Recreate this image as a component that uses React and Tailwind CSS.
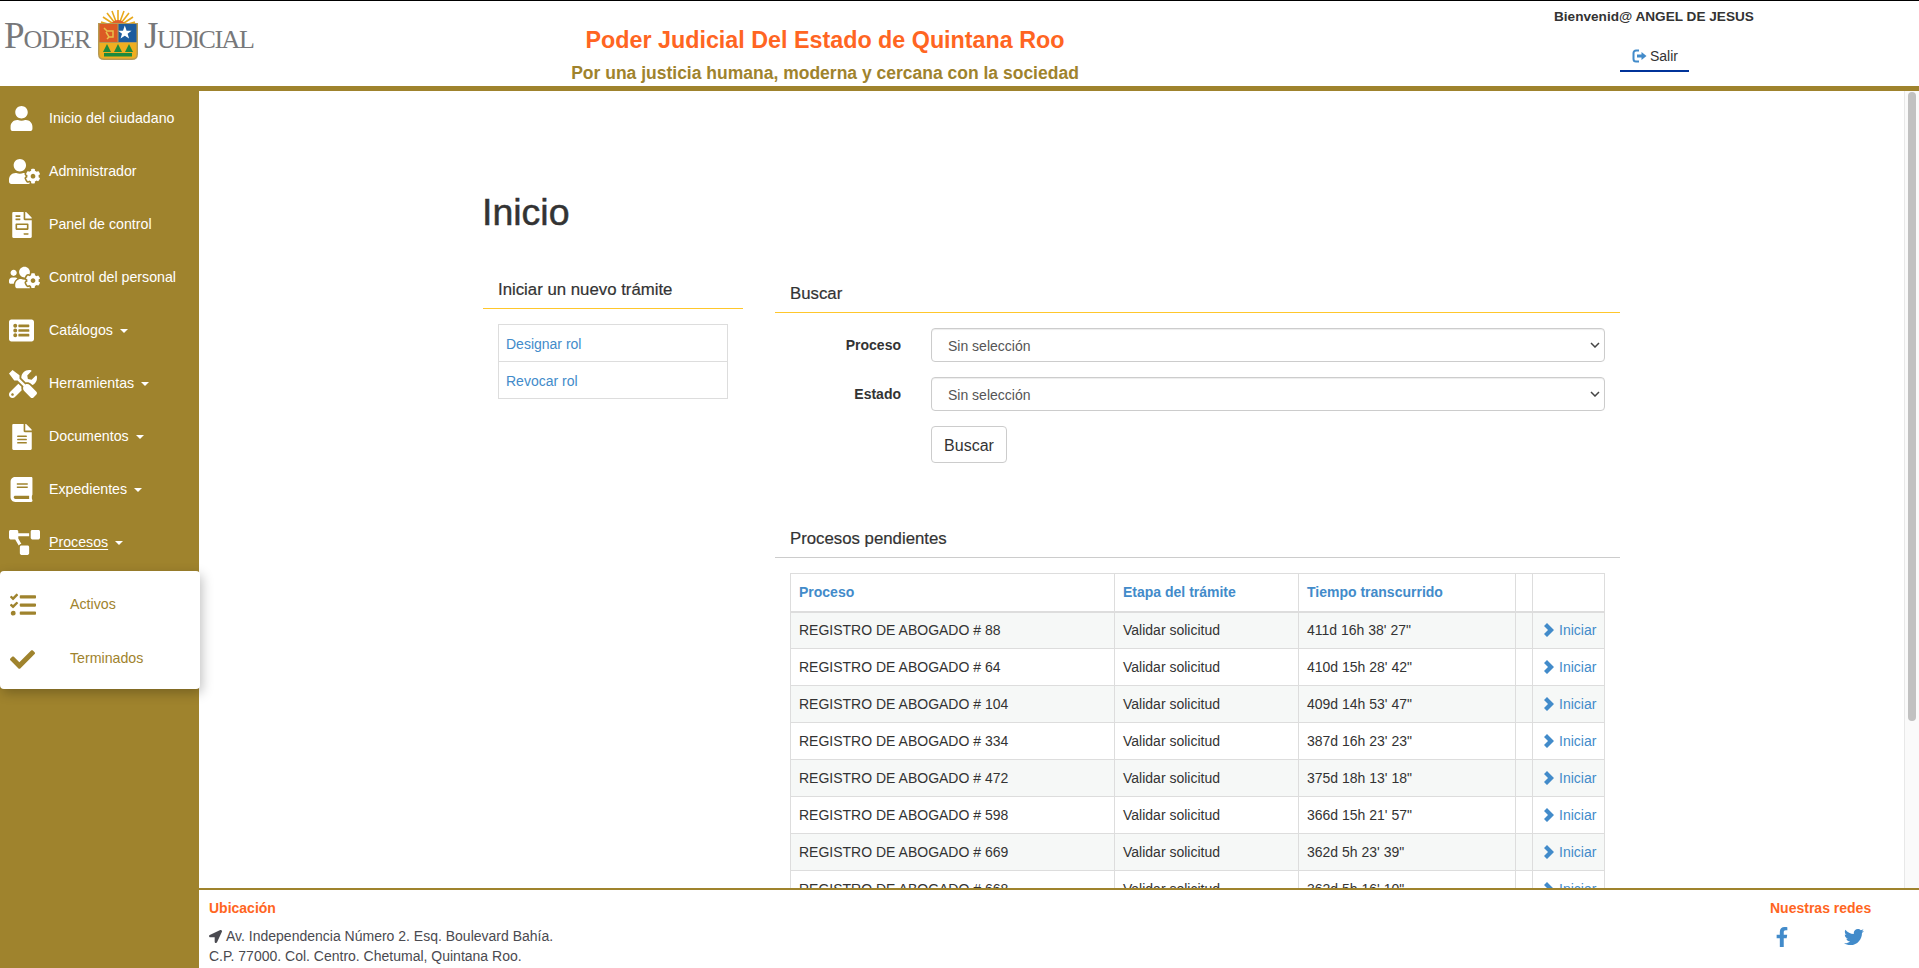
import {
  FaBook,
  FaCheck,
  FaFacebookF,
  FaFileAlt,
  FaFileInvoice,
  FaListAlt,
  FaLocationArrow,
  FaProjectDiagram,
  FaTasks,
  FaTools,
  FaTwitter,
  FaUser,
  FaUserCog,
  FaUsersCog,
} from "react-icons/fa";

const menu = [
  { label: "Inicio del ciudadano", icon: FaUser, size: 25 },
  { label: "Administrador", icon: FaUserCog, size: 31 },
  { label: "Panel de control", icon: FaFileInvoice, size: 26 },
  { label: "Control del personal", icon: FaUsersCog, size: 31 },
  { label: "Catálogos", icon: FaListAlt, size: 25, caret: true },
  { label: "Herramientas", icon: FaTools, size: 28, caret: true },
  { label: "Documentos", icon: FaFileAlt, size: 26, caret: true },
  { label: "Expedientes", icon: FaBook, size: 25, caret: true },
  { label: "Procesos", icon: FaProjectDiagram, size: 31, caret: true, active: true },
];

const pendientes = [
  ["REGISTRO DE ABOGADO # 88", "411d 16h 38' 27\""],
  ["REGISTRO DE ABOGADO # 64", "410d 15h 28' 42\""],
  ["REGISTRO DE ABOGADO # 104", "409d 14h 53' 47\""],
  ["REGISTRO DE ABOGADO # 334", "387d 16h 23' 23\""],
  ["REGISTRO DE ABOGADO # 472", "375d 18h 13' 18\""],
  ["REGISTRO DE ABOGADO # 598", "366d 15h 21' 57\""],
  ["REGISTRO DE ABOGADO # 669", "362d 5h 23' 39\""],
  ["REGISTRO DE ABOGADO # 668", "362d 5h 16' 10\""],
];

function Shield() {
  return (
    <svg width="42" height="54" viewBox="0 0 42 54" className="shrink-0">
      <g stroke="#e8a91c" strokeWidth="1.6">
        <path d="M21 19V2M21 19L15 3M21 19L27 3M21 19L10 5M21 19L32 5M21 19L6 9M21 19L36 9M21 19L4 14M21 19L38 14" />
      </g>
      <path d="M13 20a8 8 0 0 1 16 0z" fill="#e2602a" />
      <path d="M1 15h40v31q0 6-6 6H7q-6 0-6-6z" fill="#b79a53" />
      <rect x="2.5" y="16" width="18" height="18" fill="#dc5a24" />
      <rect x="21.5" y="16" width="18" height="18" fill="#1d5c9e" />
      <path d="M2.500 35h37v11q0 4.500-4.500 4.500H7q-4.500 0-4.500-4.500z" fill="#efae20" />
      <path d="M7 20l3 3h6v6h-4l-3-5M12 29l-2 2" stroke="#e8c04a" strokeWidth="1.500" fill="none" />
      <path d="M30.500 18.500l2.200 6.200h6l-4.800 3.700 1.800 6-5.200-3.600-5.200 3.600 1.800-6-4.800-3.700h6z" fill="#fff" transform="translate(2.800 2.400) scale(.82)" />
      <g fill="#1d8a3c">
        <path d="M10 36l4 8H6zM21 36l4 8h-8zM32 36l4 8h-8z" />
        <rect x="7" y="45" width="28" height="3.500" />
      </g>
    </svg>
  );
}

function Logo() {
  return (
    <div className="flex items-center font-['Liberation_Serif',serif] text-[#77787a]">
      <span className="w-[97px] pl-1 text-[37px] leading-none tracking-[-1px] [font-variant:small-caps]">
        Poder
      </span>
      <Shield />
      <span className="pl-[5px] text-[37px] leading-none tracking-[-1.5px] [font-variant:small-caps]">
        Judicial
      </span>
    </div>
  );
}

function LogoutIcon() {
  return (
    <svg width="15" height="14" viewBox="0 0 15 14" className="mt-[2px]">
      <path d="M7 1.500H4a2.500 2.500 0 0 0-2.500 2.500v6A2.500 2.500 0 0 0 4 12.500h3" fill="none" stroke="#428bca" strokeWidth="2" />
      <path d="M5 5.500h4.500V3L14.500 7l-5 4V8.500H5z" fill="#428bca" />
    </svg>
  );
}

function Header() {
  return (
    <header className="flex h-[91px] shrink-0 border-t border-b-[5px] border-t-black border-b-[#9f832d] bg-white">
      <div className="flex w-[420px] items-start pt-[7px]">
        <Logo />
      </div>
      <div className="w-[810px] pt-[24px] text-center font-bold">
        <div className="text-[23.3px] leading-[30px] text-[#ff6522]">
          Poder Judicial Del Estado de Quintana Roo
        </div>
        <div className="mt-[7px] text-[17.5px] leading-[22px] text-[#9f832d]">
          Por una justicia humana, moderna y cercana con la sociedad
        </div>
      </div>
      <div className="ml-[324px] w-[201px] pt-[8px]">
        <div className="text-[13.6px] leading-[16px] font-bold whitespace-nowrap text-[#333]">
          Bienvenid@ ANGEL DE JESUS
        </div>
        <div className="mt-[22px] ml-[66px] flex h-[25px] w-[69px] items-start gap-[3px] border-b-2 border-[#003399] pl-[12px] text-[14px] leading-[18px] text-[#333]">
          <LogoutIcon />
          Salir
        </div>
      </div>
    </header>
  );
}

function Sidebar() {
  return (
    <aside className="relative w-[199px] shrink-0 bg-[#9f832d] pt-[1px] text-[14.2px] text-white">
      {menu.map((item) => {
        const Icon = item.icon;
        return (
          <div key={item.label} className="flex h-[53px] items-center">
            <div className="flex w-[49px] shrink-0 justify-start pl-[9px]">
              <Icon size={item.size} />
            </div>
            <span className={item.active ? "underline underline-offset-2" : ""}>{item.label}</span>
            {item.caret && (
              <span className="ml-[7px] h-0 w-0 border-x-4 border-t-4 border-x-transparent border-t-white" />
            )}
          </div>
        );
      })}
      <div className="absolute top-[480px] left-0 z-10 h-[118px] w-[200px] rounded bg-white pt-[6px] text-[#9f832d] shadow-[2px_4px_12px_rgba(0,0,0,0.25)]">
        <div className="flex h-[55px] items-center">
          <div className="w-[70px] pl-[10px]">
            <FaTasks size={26} />
          </div>
          Activos
        </div>
        <div className="flex h-[54px] items-center">
          <div className="w-[70px] pl-[10px]">
            <FaCheck size={25} />
          </div>
          Terminados
        </div>
      </div>
    </aside>
  );
}

function SectionTitle({ children, border = "border-[#ffc72c]" }) {
  return (
    <div className={`border-b ${border} px-[15px] pb-[7px] text-[16.8px] leading-[22px] text-[#333] [-webkit-text-stroke:0.2px]`}>
      {children}
    </div>
  );
}

function FormRow({ label }) {
  return (
    <div className="flex h-[34px] items-center">
      <label className="w-[126px] text-right text-[14px] font-bold text-[#333]">{label}</label>
      <div className="relative ml-[30px] w-[674px]">
        <select className="h-[34px] w-full appearance-none rounded border border-[#ccc] bg-white pt-[2px] pl-[16px] text-[14px] text-[#555] shadow-[inset_0_1px_1px_rgba(0,0,0,0.075)]">
          <option>Sin selección</option>
        </select>
        <svg width="10" height="6" viewBox="0 0 10 6" className="pointer-events-none absolute top-[14px] right-[5px]">
          <path d="M1 1l4 4 4-4" fill="none" stroke="#444" strokeWidth="1.500" />
        </svg>
      </div>
    </div>
  );
}

function ChevronBold() {
  return (
    <svg width="10" height="14" viewBox="0 0 10 14" className="shrink-0">
      <path d="M0 3l3-3 7 7-7 7-3-3 4-4z" fill="#428bca" />
    </svg>
  );
}

function ProcesosTable() {
  const th = "border border-[#ddd] border-b-2 px-2 text-left font-bold text-[#428bca]";
  const td = "border border-[#ddd] px-2";
  return (
    <table className="w-[814px] table-fixed border-collapse text-[14px] text-[#333]">
      <thead>
        <tr className="h-[38px]">
          <th className={`w-[324px] ${th}`}>Proceso</th>
          <th className={`w-[184px] ${th}`}>Etapa del trámite</th>
          <th className={`w-[217px] ${th}`}>Tiempo transcurrido</th>
          <th className={`w-[17px] ${th}`}></th>
          <th className={`w-[72px] ${th}`}></th>
        </tr>
      </thead>
      <tbody>
        {pendientes.map(([proceso, tiempo], i) => (
          <tr key={proceso} className={`h-[37px] ${i % 2 === 0 ? "bg-[#f6f8f7]" : "bg-white"}`}>
            <td className={td}>{proceso}</td>
            <td className={td}>Validar solicitud</td>
            <td className={td}>{tiempo}</td>
            <td className={td}></td>
            <td className={td}>
              <span className="flex items-center gap-[5px] pl-[3px] whitespace-nowrap text-[#428bca]">
                <ChevronBold />
                Iniciar
              </span>
            </td>
          </tr>
        ))}
      </tbody>
    </table>
  );
}

function Content() {
  return (
    <div className="mx-auto w-[1171px] px-[17px] pt-[101px]">
      <h1 className="-ml-px text-[37.5px] leading-[40px] text-[#333] [-webkit-text-stroke:0.5px]">Inicio</h1>
      <div className="mt-[47px] flex gap-[32px]">
        <section className="w-[260px] shrink-0">
          <SectionTitle>Iniciar un nuevo trámite</SectionTitle>
          <div className="mx-[15px] mt-[15px] border border-[#ddd] text-[14px] text-[#428bca]">
            <div className="flex h-[37px] items-center border-b border-[#ddd] pt-[2px] pl-[7px]">Designar rol</div>
            <div className="flex h-[36px] items-center pt-[2px] pl-[7px]">Revocar rol</div>
          </div>
        </section>
        <div className="min-w-0 flex-1 pt-1">
          <section>
            <SectionTitle>Buscar</SectionTitle>
            <div className="mt-[15px] flex flex-col gap-[15px]">
              <FormRow label="Proceso" />
              <FormRow label="Estado" />
            </div>
            <button className="mt-[15px] ml-[156px] h-[37px] w-[76px] rounded border border-[#ccc] bg-white pt-[2px] text-[16px] text-[#333]">
              Buscar
            </button>
          </section>
          <section className="mt-[65px]">
            <SectionTitle border="border-[#ccc]">Procesos pendientes</SectionTitle>
            <div className="mt-[15px] px-[15px]">
              <ProcesosTable />
            </div>
          </section>
        </div>
      </div>
    </div>
  );
}

function Footer() {
  return (
    <footer className="flex h-[80px] shrink-0 justify-between border-t-2 border-[#9f832d] bg-white text-[14px]">
      <div className="pt-[10px] pl-[10px]">
        <div className="leading-[16px] font-bold text-[#ff6522]">Ubicación</div>
        <div className="mt-[10px] leading-[20px] text-[#4a4a50]">
          <div className="flex items-center gap-[4px]">
            <FaLocationArrow size={13} />
            Av. Independencia Número 2. Esq. Boulevard Bahía.
          </div>
          <div>C.P. 77000. Col. Centro. Chetumal, Quintana Roo.</div>
        </div>
      </div>
      <div className="w-[149px] pt-[10px]">
        <div className="leading-[16px] font-bold text-[#ff6522]">Nuestras redes</div>
        <div className="mt-[11px] flex gap-[52px] pl-[2px] text-[#428bca]">
          <FaFacebookF size={20} />
          <FaTwitter size={20} />
        </div>
      </div>
    </footer>
  );
}

export default function App() {
  return (
    <div className="flex h-screen flex-col overflow-hidden bg-white font-['Liberation_Sans',Arial,sans-serif]">
      <Header />
      <div className="flex min-h-0 flex-1">
        <Sidebar />
        <div className="flex min-w-0 flex-1 flex-col">
          <div className="flex min-h-0 flex-1">
            <main className="min-w-0 flex-1 overflow-hidden">
              <Content />
            </main>
            <div className="w-[15px] shrink-0 border-l border-[#e8e8e8] bg-[#fafafa] px-[3px] pt-[1px]">
              <div className="h-[629px] rounded-full bg-[#c1c1c1]" />
            </div>
          </div>
          <Footer />
        </div>
      </div>
    </div>
  );
}
